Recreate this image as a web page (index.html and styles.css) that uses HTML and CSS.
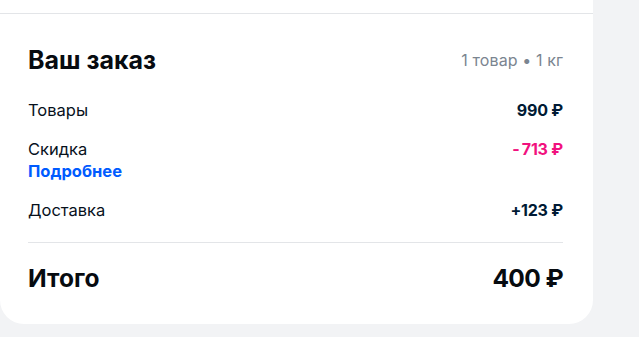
FILE: index.html
```html
<!DOCTYPE html>
<html lang="ru">
<head>
<meta charset="utf-8">
<link rel="stylesheet" href="styles.css">
</head>
<body>
<div class="card">
  <div class="top-line"></div>
  <div class="content">
    <div class="head">
      <h2 class="title">Ваш заказ</h2>
      <span class="meta">1 товар • 1 кг</span>
    </div>
    <div class="row row-first">
      <span class="label">Товары</span>
      <span class="value">990&nbsp;₽</span>
    </div>
    <div class="row">
      <div class="label-col">
        <span class="label">Скидка</span>
        <a class="more">Подробнее</a>
      </div>
      <span class="value discount">-&thinsp;713&nbsp;₽</span>
    </div>
    <div class="row">
      <span class="label">Доставка</span>
      <span class="value">+123&nbsp;₽</span>
    </div>
    <div class="divider"></div>
    <div class="total">
      <span>Итого</span>
      <span class="total-sum">400&nbsp;₽</span>
    </div>
  </div>
</div>
</body>
</html>
```
FILE: styles.css
```css
html, body {
  margin: 0;
  padding: 0;
  background: #f2f3f5;
  font-family: Inter, "Noto Sans", sans-serif;
}
.card {
  width: 593px;
  background: #ffffff;
  border-radius: 0 0 24px 24px;
  padding-top: 13px;
}
.top-line {
  height: 1px;
  background: #e3e5e8;
}
.content {
  padding: 32px 30px 31px 28px;
  display: flex;
  flex-direction: column;
}
.head {
  display: flex;
  justify-content: space-between;
  align-items: center;
  height: 28px;
}
.title {
  margin: 0;
  font-size: 25px;
  line-height: 28px;
  font-weight: 700;
  color: #070b10;
}
.meta {
  font-size: 16px;
  color: #7b8590;
  letter-spacing: 0.1px;
}
.row {
  display: flex;
  justify-content: space-between;
  align-items: flex-start;
  margin-top: 17px;
  font-size: 16.5px;
  line-height: 22px;
}
.row-first {
  margin-top: 25px;
}
.label-col {
  display: flex;
  flex-direction: column;
}
.label {
  color: #07111c;
}
.more {
  color: #005bff;
  font-weight: 700;
}
.value {
  font-size: 16px;
  font-weight: 700;
  color: #001a34;
  letter-spacing: -0.2px;
}
.discount {
  color: #f1117e;
}
.divider {
  height: 1px;
  background: #e3e5e8;
  margin-top: 21px;
}
.total {
  display: flex;
  justify-content: space-between;
  margin-top: 20px;
  font-size: 24.5px;
  line-height: 30px;
  font-weight: 700;
  color: #070b10;
}
.total-sum {
  letter-spacing: -0.6px;
}
```
